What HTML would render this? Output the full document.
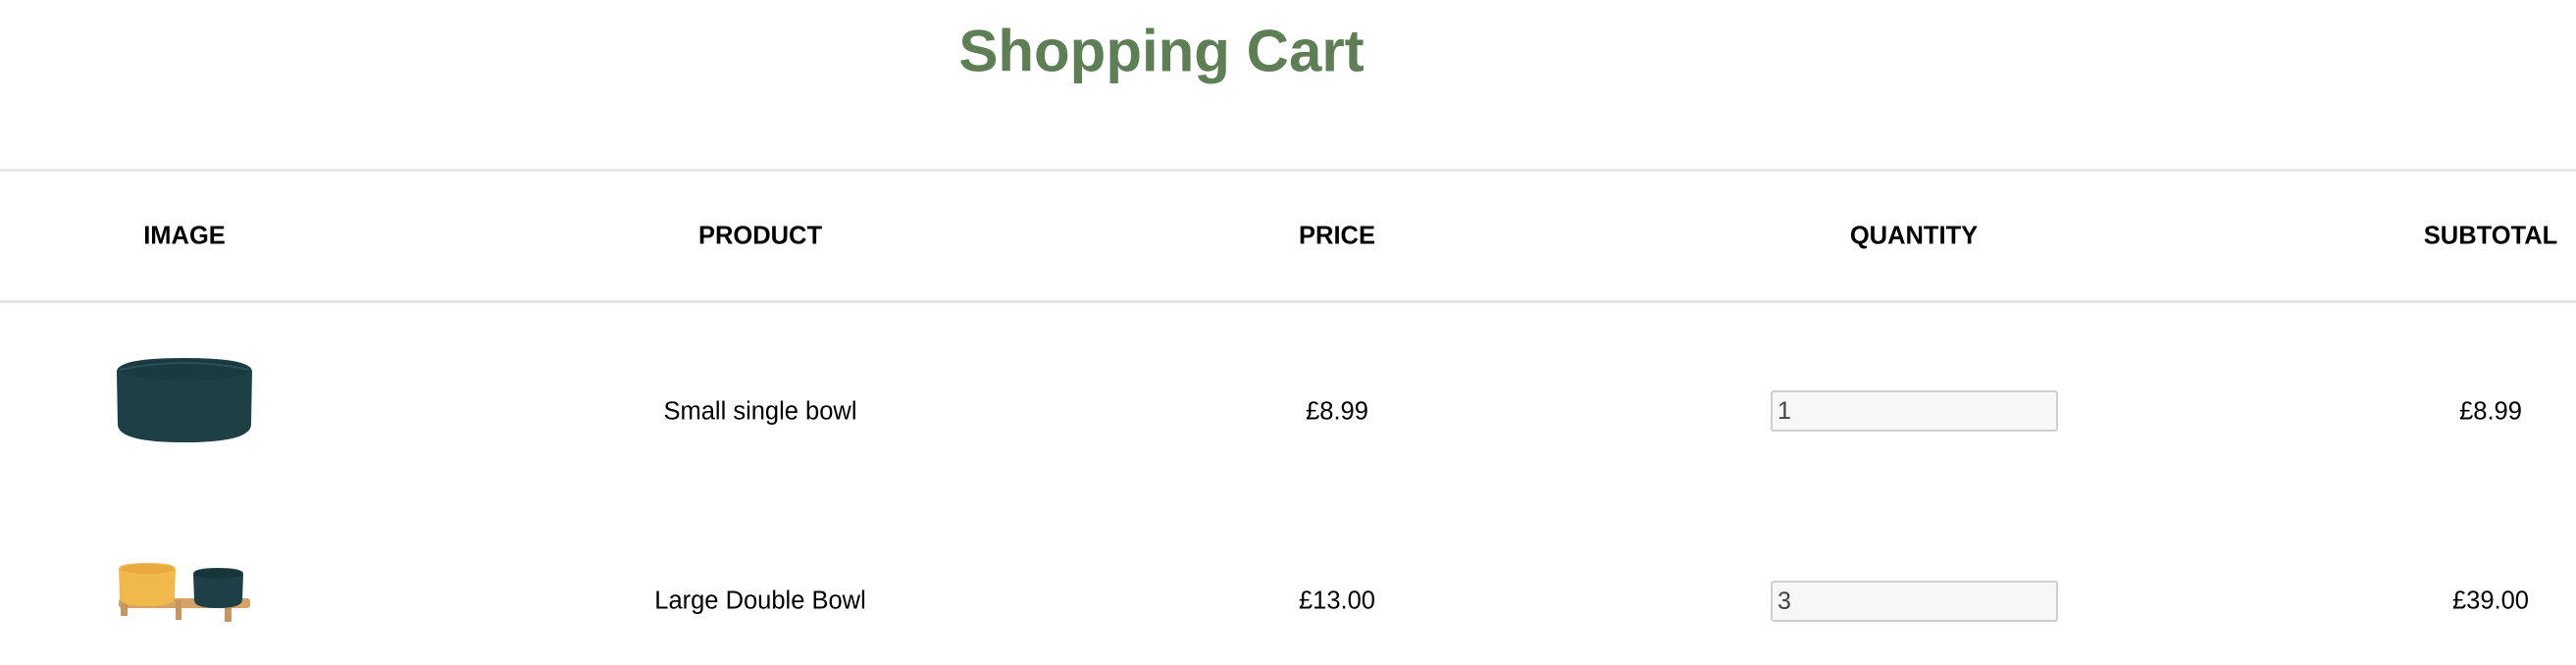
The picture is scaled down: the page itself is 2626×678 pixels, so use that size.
<!DOCTYPE html>
<html><head><meta charset="utf-8"><style>
html,body{margin:0;padding:0;background:#fff;width:2626px;height:678px;overflow:hidden;position:relative;font-family:"Liberation Sans",Arial,sans-serif;}
.t{position:absolute;white-space:nowrap;transform:translate(-50%,-50%);}
h1{position:absolute;left:1184px;top:52px;margin:0;transform:translate(-50%,-50%);font-size:60px;font-weight:bold;color:#5e7f56;white-space:nowrap;}
.line{position:absolute;left:0;width:2626px;height:3px;background:#e2e8e2;}
.h{font-weight:bold;font-size:25.5px;color:#000;}
.b{font-size:25.5px;color:#000;}
.in{position:absolute;left:1805px;width:284px;height:38px;background:#f7f7f7;border:2px solid #cfcfcf;border-radius:3px;font-size:25px;color:#444;line-height:38px;padding-left:5px;box-sizing:content-box;}
</style></head><body>
<h1>Shopping Cart</h1>
<div class="line" style="top:172px"></div>
<div class="line" style="top:306px"></div>
<div class="t h" style="left:188px;top:241px">IMAGE</div>
<div class="t h" style="left:775px;top:241px">PRODUCT</div>
<div class="t h" style="left:1363px;top:241px">PRICE</div>
<div class="t h" style="left:1951px;top:241px">QUANTITY</div>
<div class="t h" style="left:2539px;top:241px">SUBTOTAL</div>

<svg style="position:absolute;left:117px;top:363px" width="142" height="90" viewBox="0 0 142 90">
<path d="M2 16 Q2 2 71 2 Q140 2 140 16 L139 70 Q138 88 71 88 Q4 88 3 70 Z" fill="#1f3f46"/>
<ellipse cx="71" cy="14" rx="66" ry="11" fill="#193a40"/>
<path d="M5 14 Q71 0 137 14" stroke="#2d5058" stroke-width="2" fill="none"/>
</svg>
<div class="t b" style="left:775px;top:420px">Small single bowl</div>
<div class="t b" style="left:1363px;top:420px">£8.99</div>
<div class="in" style="top:398px">1</div>
<div class="t b" style="left:2539px;top:420px">£8.99</div>

<svg style="position:absolute;left:117px;top:572px" width="145" height="65" viewBox="0 0 145 65">
<rect x="4" y="38" width="134" height="10" rx="3" fill="#d4a36a"/>
<rect x="6" y="34" width="7" height="22" fill="#c8955c"/>
<rect x="112" y="34" width="7" height="28" fill="#c8955c"/>
<rect x="62" y="40" width="6" height="20" fill="#c8955c"/>
<path d="M4 8 Q4 2 33 2 Q62 2 62 8 L61 38 Q60 46 33 46 Q6 46 5 38 Z" fill="#f1b94c"/>
<ellipse cx="33" cy="8" rx="27" ry="5" fill="#e8aa3c"/>
<path d="M80 13 Q80 7 105 7 Q131 7 131 13 L130 40 Q129 48 105 48 Q81 48 81 40 Z" fill="#1f3f46"/>
<ellipse cx="105" cy="13" rx="24" ry="5" fill="#17343a"/>
</svg>
<div class="t b" style="left:775px;top:613px">Large Double Bowl</div>
<div class="t b" style="left:1363px;top:613px">£13.00</div>
<div class="in" style="top:592px">3</div>
<div class="t b" style="left:2539px;top:613px">£39.00</div>
</body></html>
